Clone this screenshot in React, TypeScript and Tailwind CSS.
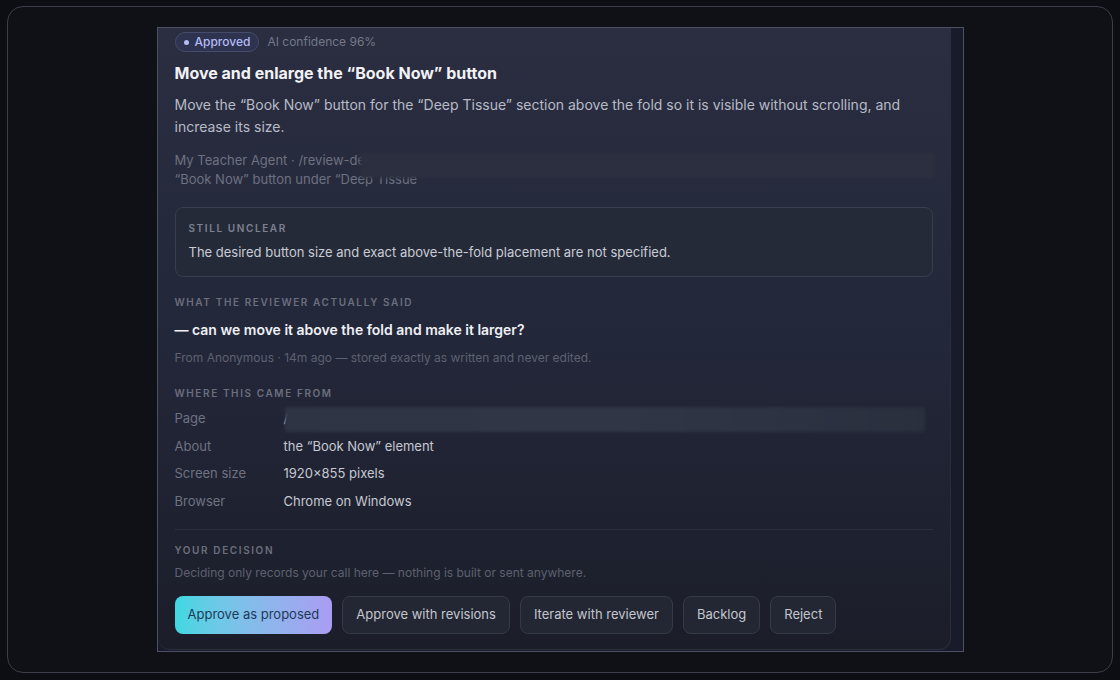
import React from "react";

const details = [
  { label: "Page", value: "/", redacted: true },
  { label: "About", value: "the “Book Now” element" },
  { label: "Screen size", value: "1920×855 pixels" },
  { label: "Browser", value: "Chrome on Windows" },
];

const actions = ["Approve with revisions", "Iterate with reviewer", "Backlog", "Reject"];

function SectionLabel({ children, className = "" }: { children: React.ReactNode; className?: string }) {
  return (
    <div className={`text-[10px] leading-[14px] font-semibold uppercase tracking-[0.16em] text-[#6b6f7d] ${className}`}>
      {children}
    </div>
  );
}

export default function App() {
  return (
    <div className="w-[1120px] h-[680px] bg-[#0c0e13] px-[7px] pt-[6px] pb-[7px] font-['Inter',sans-serif]">
      <div className="h-full rounded-[16px] border border-[#3a3e4a] bg-[#0f1117] flex items-center justify-center">
        <div className="w-[807px] h-[625px] border border-[#4b5163] bg-[#181c2a] flex overflow-hidden">
          <section className="w-[793px] h-[622px] rounded-b-[12px] border-r border-b border-[#2a2e3b] bg-gradient-to-b from-[#2b2e41] via-[#23273a] to-[#1b1e29] pl-[17px] pr-[17px] pt-[4px]">
            <header className="flex items-center gap-2">
              <span className="h-5 flex items-center gap-[6px] rounded-full border border-[#454b6a] bg-[#2e3350] px-[8px] text-[12px] font-medium text-[#b4bcf5]">
                <span className="w-[5px] h-[5px] rounded-full bg-[#b4bcf5]" />
                Approved
              </span>
              <span className="text-[12px] text-[#737887]">AI confidence 96%</span>
            </header>

            <h2 className="mt-[10px] text-[16px] leading-[22px] font-bold text-[#f1f2f5]">
              Move and enlarge the “Book Now” button
            </h2>
            <p className="mt-[10px] text-[14px] leading-[22px] text-[#b7bbc6]">
              Move the “Book Now” button for the “Deep Tissue” section above the fold so it is visible without scrolling, and
              increase its size.
            </p>

            <div className="relative mt-[13px] text-[13px] leading-[19px] text-[#6d7180]">
              <div>My Teacher Agent · /review-de</div>
              <div>“Book Now” button under “Deep Tissue</div>
              <div className="absolute left-[185px] right-[-2px] top-[1px] h-[26px] rounded-[3px] bg-[#2b2f3f] blur-[1.5px]" />
            </div>

            <div className="mt-[18px] rounded-[8px] border border-[#393e4d] bg-[#262a38]/80 pl-[13px] pt-[13px] pb-[14px]">
              <div className="text-[10px] leading-[14px] font-semibold uppercase tracking-[0.16em] text-[#7d8290]">
                Still unclear
              </div>
              <p className="mt-[7px] text-[13px] leading-[20px] text-[#c9ccd4]">
                The desired button size and exact above-the-fold placement are not specified.
              </p>
            </div>

            <SectionLabel className="mt-[18px]">What the reviewer actually said</SectionLabel>
            <p className="mt-[11px] text-[14px] leading-[20px] font-semibold text-[#eef0f4]">
              — can we move it above the fold and make it larger?
            </p>
            <p className="mt-[9px] text-[12px] leading-[18px] text-[#5d6170]">
              From Anonymous · 14m ago — stored exactly as written and never edited.
            </p>

            <SectionLabel className="mt-[19px]">Where this came from</SectionLabel>
            <dl className="mt-[5px]">
              {details.map((d) => (
                <div key={d.label} className="relative flex items-center h-[27.7px] text-[13px]">
                  <dt className="w-[109px] text-[#6e7281]">{d.label}</dt>
                  <dd className="text-[#c6c9d1]">{d.value}</dd>
                  {d.redacted && (
                    <div className="absolute left-[110px] right-[8px] top-[2px] h-[25px] rounded-[3px] bg-gradient-to-r from-[#2f3445] via-[#313647] to-[#2a2f3e] blur-[1.5px]" />
                  )}
                </div>
              ))}
            </dl>

            <div className="mt-[13px] border-t border-[#2c303c]" />

            <SectionLabel className="mt-[13px]">Your decision</SectionLabel>
            <p className="mt-[7px] text-[12px] leading-[18px] text-[#5d6170]">
              Deciding only records your call here — nothing is built or sent anywhere.
            </p>

            <div className="mt-[14px] flex gap-[10px]">
              <button className="h-[38px] px-[13px] rounded-[8px] bg-gradient-to-r from-[#3dd8e2] to-[#a99cf2] text-[13px] text-[#1e3a58]">
                Approve as proposed
              </button>
              {actions.map((a) => (
                <button
                  key={a}
                  className="h-[38px] px-[13px] rounded-[8px] border border-[#353a48] bg-[#232733] text-[13px] text-[#c3c6ce]"
                >
                  {a}
                </button>
              ))}
            </div>
          </section>
        </div>
      </div>
    </div>
  );
}
